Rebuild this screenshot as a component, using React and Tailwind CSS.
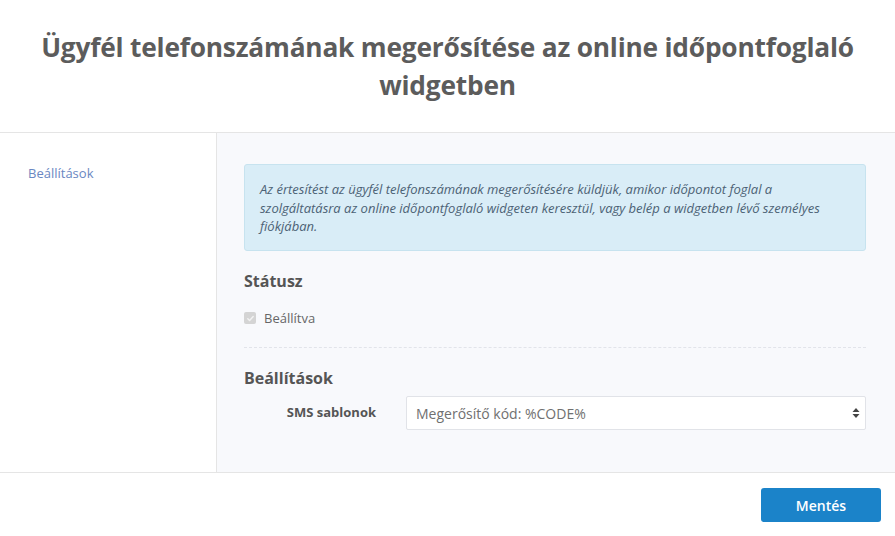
import React from 'react';

const font = { fontFamily: '"Open Sans", "Noto Sans", sans-serif' };

export default function App() {
  return (
    <div className="w-[895px] h-[536px] bg-white flex flex-col text-[#555]" style={font}>
      <div className="h-[133px] border-b border-[#e5e5e5] flex items-center justify-center px-10">
        <h1 className="text-center text-[26.3px] leading-[38px] font-bold text-[#5c5c5c] tracking-[-0.2px]">
          Ügyfél telefonszámának megerősítése az online időpontfoglaló widgetben
        </h1>
      </div>

      <div className="flex h-[339px]">
        <div className="w-[217px] border-r border-[#e5e5e5] pt-[27px] pl-[28px]">
          <a className="text-[13px] text-[#6a87c2]">Beállítások</a>
        </div>
        <div className="flex-1 bg-[#f8f9fc] pt-[31px] pl-[27px] pr-[29px]">
          <div className="bg-[#d9edf7] border border-[#c7e3ef] rounded-[3px] px-[15px] pt-[15px] pb-[14px] text-[13px] leading-[18.5px] italic text-[#4c6275]">
            Az értesítést az ügyfél telefonszámának megerősítésére küldjük, amikor időpontot foglal a szolgáltatásra az online időpontfoglaló widgeten keresztül, vagy belép a widgetben lévő személyes fiókjában.
          </div>

          <h3 className="mt-[19px] text-[16px] font-bold text-[#555] leading-[22px]">Státusz</h3>
          <label className="mt-[17px] flex items-center gap-[8px] text-[13px] text-[#666]">
            <span className="w-[12px] h-[12px] rounded-[2px] bg-[#d4d4d4] flex items-center justify-center">
              <svg width="9" height="9" viewBox="0 0 10 10" fill="none">
                <path d="M2 5.2l2 2 4-4.4" stroke="#f2f2f2" strokeWidth="1.6" strokeLinecap="round" strokeLinejoin="round" />
              </svg>
            </span>
            Beállítva
          </label>

          <div className="mt-[19px] border-t border-dashed border-[#e2e4ea]" />

          <h3 className="mt-[19px] text-[16px] font-bold text-[#555] leading-[22px]">Beállítások</h3>
          <div className="mt-[7px] flex items-center">
            <div className="w-[162px] pr-[30px] text-right text-[13px] font-bold text-[#555]">SMS sablonok</div>
            <div className="flex-1 h-[34px] bg-white border border-[#e1e3e8] rounded-[2px] flex items-center justify-between pl-[9px] pr-[5px] text-[14px] text-[#707070]">
              <span>Megerősítő kód: %CODE%</span>
              <svg width="8" height="12" viewBox="0 0 8 12">
                <path d="M4 1L7.5 5H0.5z" fill="#444" />
                <path d="M4 11L7.5 7H0.5z" fill="#444" />
              </svg>
            </div>
          </div>
        </div>
      </div>

      <div className="flex-1 border-t border-[#e5e5e5] flex justify-end items-start pt-[15px] pr-[14px]">
        <button className="w-[120px] h-[34px] rounded-[3px] bg-[#1b83c9] text-white text-[14px] font-semibold">Mentés</button>
      </div>
    </div>
  );
}
